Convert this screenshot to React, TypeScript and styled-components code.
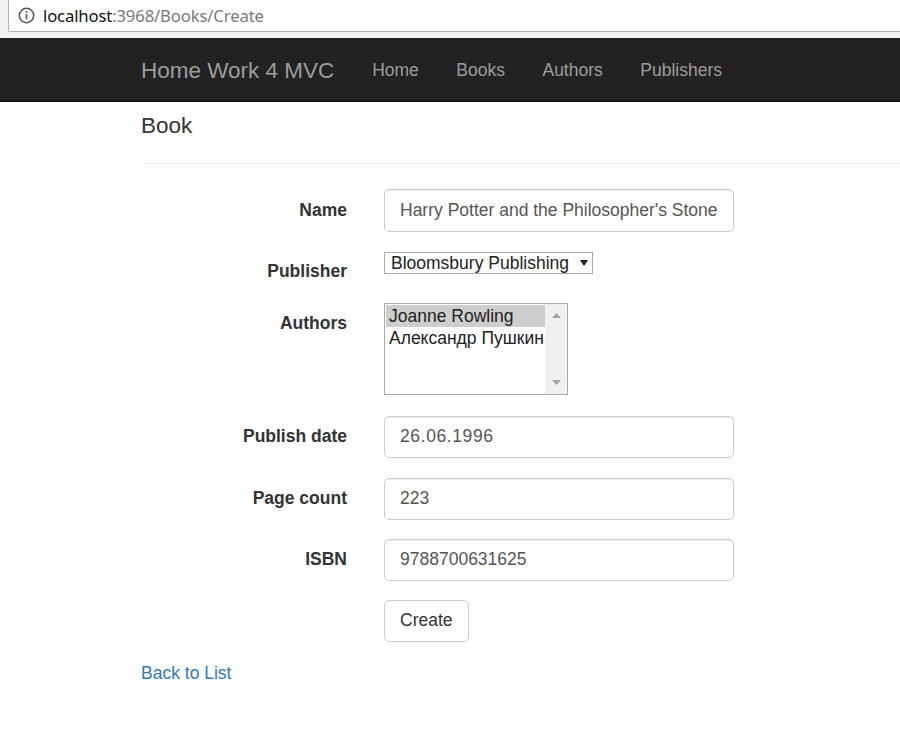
import React from "react";
import styled, { createGlobalStyle } from "styled-components";

const Global = createGlobalStyle`
  html, body { margin: 0; padding: 0; background: #fff; }
  body {
    font-family: "Liberation Sans", Arial, Helvetica, sans-serif;
    color: #333;
    font-size: 17.5px;
    line-height: 25px;
    overflow: hidden;
  }
  * { box-sizing: border-box; }
`;

const Page = styled.div`
  width: 900px;
  height: 747px;
  overflow: hidden;
  display: flex;
  flex-direction: column;
`;

/* ---------- browser address bar ---------- */
const BrowserBar = styled.div`
  height: 38px;
  background: #f1f1f1;
  padding-left: 8px;
  display: flex;
  align-items: flex-start;
`;

const AddressField = styled.div`
  flex: 1;
  height: 33px;
  margin-top: -1px;
  background: #fff;
  border: 1px solid #b4b4b4;
  border-right: none;
  border-bottom-left-radius: 2px;
  display: flex;
  align-items: center;
  padding-left: 9px;
  gap: 8px;
`;

const Url = styled.span`
  font-family: "Noto Sans", "Open Sans", sans-serif;
  font-size: 16.7px;
  letter-spacing: -0.15px;
  color: #111;
  line-height: 20px;
`;

const UrlRest = styled.span`
  color: #7a7a7a;
`;

/* ---------- navbar ---------- */
const Navbar = styled.nav`
  height: 64px;
  background: #222;
  border-bottom: 1px solid #080808;
  display: flex;
  align-items: center;
  padding-left: 141px;
  padding-top: 2px;
`;

const Brand = styled.a`
  font-size: 22.5px;
  color: #9d9d9d;
  text-decoration: none;
  margin-right: 19px;
  line-height: 25px;
`;

const NavLink = styled.a`
  font-size: 17.5px;
  color: #9d9d9d;
  text-decoration: none;
  padding: 0 18.75px;
  line-height: 25px;
`;

/* ---------- content ---------- */
const Main = styled.main`
  padding-left: 141px;
  display: flex;
  flex-direction: column;
`;

const Title = styled.h4`
  margin: 11px 0 0;
  font-size: 22.5px;
  font-weight: 500;
  line-height: 25px;
  color: #333;
`;

const Rule = styled.hr`
  margin: 25px 0 25px;
  border: 0;
  border-top: 1px solid #eee;
`;

const Form = styled.form`
  display: flex;
  flex-direction: column;
`;

const Group = styled.div<{ $mb: number }>`
  display: flex;
  align-items: flex-start;
  margin-bottom: ${(p) => p.$mb}px;
`;

const Label = styled.label`
  width: 206px;
  margin-right: 37px;
  padding-top: 8.5px;
  text-align: right;
  font-weight: bold;
  font-size: 17.5px;
  line-height: 25px;
  color: #333;
`;

const TextInput = styled.input`
  width: 350px;
  height: 42.5px;
  padding: 7.5px 15px;
  font-family: "Liberation Sans", Arial, sans-serif;
  font-size: 17.5px;
  line-height: 25px;
  color: #555;
  background: #fff;
  border: 1px solid #ccc;
  border-radius: 5px;
  box-shadow: inset 0 1px 1px rgba(0, 0, 0, 0.075);
  outline: none;
`;

const SelectWrap = styled.span`
  position: relative;
  display: inline-flex;
  margin-top: 2px;
`;

const NativeSelect = styled.select`
  appearance: none;
  -webkit-appearance: none;
  width: 209px;
  height: 22px;
  padding: 0 0 0 6px;
  font-family: "Liberation Sans", Arial, sans-serif;
  font-size: 17.5px;
  line-height: 20px;
  color: #222;
  background: #fff;
  border: 1px solid #a9a9a9;
  border-radius: 0;
  outline: none;
`;

const SelectArrow = styled.svg`
  position: absolute;
  right: 5px;
  top: 8px;
  pointer-events: none;
`;

const ListBox = styled.div`
  width: 184px;
  height: 92px;
  border: 1px solid #a9a9a9;
  display: flex;
  background: #fff;
`;

const Options = styled.ul`
  flex: 1;
  margin: 0;
  padding: 1px 0 0 1px;
  list-style: none;
`;

const Option = styled.li<{ $selected?: boolean }>`
  height: 22.5px;
  padding-left: 3px;
  font-size: 17.5px;
  line-height: 22px;
  color: #222;
  white-space: nowrap;
  background: ${(p) => (p.$selected ? "#cecece" : "transparent")};
`;

const ScrollTrack = styled.div`
  width: 22px;
  background: #f0f0f0;
  display: flex;
  flex-direction: column;
  justify-content: space-between;
  align-items: center;
  padding: 9px 0 9px;
`;

const SubmitButton = styled.button`
  height: 42.5px;
  padding: 7.5px 15px;
  font-family: "Liberation Sans", Arial, sans-serif;
  font-size: 17.5px;
  line-height: 25px;
  color: #333;
  background: #fff;
  border: 1px solid #ccc;
  border-radius: 5px;
  cursor: pointer;
`;

const Spacer = styled.div`
  width: 243px;
  flex-shrink: 0;
`;

const BackLink = styled.a`
  color: #337ab7;
  text-decoration: none;
  font-size: 17.5px;
  line-height: 25px;
`;

const InfoIcon = () => (
  <svg width="17" height="17" viewBox="0 0 17 17" aria-hidden="true">
    <circle cx="8.5" cy="8.5" r="7.2" fill="none" stroke="#555" strokeWidth="1.5" />
    <rect x="7.7" y="7.2" width="1.6" height="5" fill="#555" />
    <circle cx="8.5" cy="5" r="1" fill="#555" />
  </svg>
);

const Tri = ({ up }: { up?: boolean }) => (
  <svg width="9" height="5" viewBox="0 0 9 5" aria-hidden="true">
    <polygon points={up ? "0,5 9,5 4.5,0" : "0,0 9,0 4.5,5"} fill="#a3a3a3" />
  </svg>
);

export default function App() {
  return (
    <Page>
      <Global />
      <BrowserBar>
        <AddressField>
          <InfoIcon />
          <Url>
            localhost<UrlRest>:3968/Books/Create</UrlRest>
          </Url>
        </AddressField>
      </BrowserBar>

      <Navbar>
        <Brand href="#">Home Work 4 MVC</Brand>
        <NavLink href="#">Home</NavLink>
        <NavLink href="#">Books</NavLink>
        <NavLink href="#">Authors</NavLink>
        <NavLink href="#">Publishers</NavLink>
      </Navbar>

      <Main>
        <Title>Book</Title>
        <Rule />
        <Form onSubmit={(e) => e.preventDefault()}>
          <Group $mb={18.5}>
            <Label>Name</Label>
            <TextInput defaultValue="Harry Potter and the Philosopher's Stone" />
          </Group>
          <Group $mb={19}>
            <Label>Publisher</Label>
            <SelectWrap>
              <NativeSelect defaultValue="b">
                <option value="b">Bloomsbury Publishing</option>
              </NativeSelect>
              <SelectArrow width="8" height="6" viewBox="0 0 8 6">
                <polygon points="0,0 8,0 4,6" fill="#222" />
              </SelectArrow>
            </SelectWrap>
          </Group>
          <Group $mb={21}>
            <Label>Authors</Label>
            <ListBox role="listbox">
              <Options>
                <Option $selected>Joanne Rowling</Option>
                <Option>Александр Пушкин</Option>
              </Options>
              <ScrollTrack>
                <Tri up />
                <Tri />
              </ScrollTrack>
            </ListBox>
          </Group>
          <Group $mb={19.5}>
            <Label>Publish date</Label>
            <TextInput defaultValue="26.06.1996" style={{ letterSpacing: "0.6px" }} />
          </Group>
          <Group $mb={18.5}>
            <Label>Page count</Label>
            <TextInput defaultValue="223" />
          </Group>
          <Group $mb={18.5}>
            <Label>ISBN</Label>
            <TextInput defaultValue="9788700631625" />
          </Group>
          <Group $mb={18.5}>
            <Spacer />
            <SubmitButton type="submit">Create</SubmitButton>
          </Group>
        </Form>
        <div>
          <BackLink href="#">Back to List</BackLink>
        </div>
      </Main>
    </Page>
  );
}
